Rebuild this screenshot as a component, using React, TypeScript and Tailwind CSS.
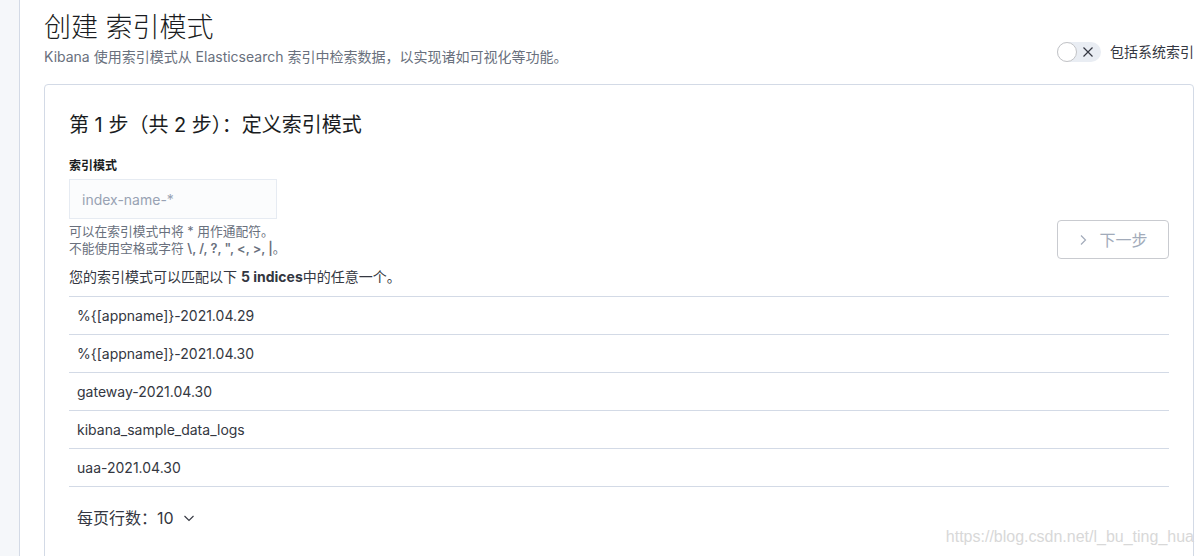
import React from "react";

const rows = [
  "%{[appname]}-2021.04.29",
  "%{[appname]}-2021.04.30",
  "gateway-2021.04.30",
  "kibana_sample_data_logs",
  "uaa-2021.04.30",
];

export default function App() {
  return (
    <div
      className="relative flex h-[556px] w-[1204px] overflow-hidden bg-white text-[#343741]"
      style={{ fontFamily: "Inter, 'Noto Sans CJK SC', sans-serif" }}
    >
      <div className="w-[20px] shrink-0 border-r border-[#d3dae6] bg-[#f5f7fa]" />
      <div className="flex-1 pl-6 pr-[10px] pt-[10px]">
        <div className="flex items-end justify-between">
          <div>
            <h1 className="text-[27px] font-light leading-[36px] text-[#1a1c21]">创建 索引模式</h1>
            <p className="mt-[1px] text-[14px] leading-[20px] text-[#69707d]">
              Kibana 使用索引模式从 Elasticsearch 索引中检索数据，以实现诸如可视化等功能。
            </p>
          </div>
          <div className="mb-[5px] flex items-center gap-[9px]">
            <div className="relative h-[20px] w-[44px] rounded-full bg-[#e9edf3]">
              <div className="absolute left-0 top-0 h-[20px] w-[20px] rounded-full border border-[#c2c3c6] bg-white" />
              <svg className="absolute left-[25px] top-[4px]" width="12" height="12" viewBox="0 0 12 12">
                <path d="M1.5 1.5 L10.5 10.5 M10.5 1.5 L1.5 10.5" stroke="#343741" strokeWidth="1.2" fill="none" />
              </svg>
            </div>
            <span className="text-[14px] leading-[20px] text-[#343741]">包括系统索引</span>
          </div>
        </div>

        <div className="mt-[17px] rounded-[4px] border border-[#d3dae6] px-6 pt-6 pb-10">
          <h2 className="text-[20px] leading-[32px] text-[#1a1c21]">第 1 步（共 2 步）：定义索引模式</h2>
          <div className="mt-4 flex items-end justify-between">
            <div>
              <div className="text-[12px] font-bold leading-[18px] text-[#1a1c21]">索引模式</div>
              <div className="mt-[4px] flex h-[40px] w-[208px] items-center border border-[#e6ebf2] bg-[#fbfcfd] px-3 text-[14px] text-[#98a2b3]">
                index-name-*
              </div>
              <div className="mt-[4px] text-[12.75px] leading-[17px] text-[#69707d]">
                <div>可以在索引模式中将 * 用作通配符。</div>
                <div>
                  不能使用空格或字符 <span className="font-semibold">\, /, ?, ", &lt;, &gt;, |</span>。
                </div>
              </div>
            </div>
            <button className="mb-[-2px] flex h-[39px] w-[112px] items-center justify-center gap-[11px] rounded-[4px] border border-[#c9cbd0] text-[16px] text-[#a2abba]">
              <svg width="10" height="12" viewBox="0 0 10 12">
                <path d="M3 1.5 L7.5 6 L3 10.5" stroke="#a2abba" strokeWidth="1.2" fill="none" />
              </svg>
              下一步
            </button>
          </div>
          <p className="mt-[10px] text-[14px] leading-[20px] text-[#343741]">
            您的索引模式可以匹配以下 <span className="font-bold">5 indices</span>中的任意一个。
          </p>
          <div className="mt-[9px] border-t border-[#d3dae6]">
            {rows.map((r) => (
              <div key={r} className="flex h-[38px] items-center border-b border-[#d3dae6] px-2 text-[14px] text-[#343741]">
                {r}
              </div>
            ))}
          </div>
          <div className="mt-[21px] flex items-center gap-[9px] px-2 text-[16px] leading-[20px] text-[#343741]">
            <span>每页行数：10</span>
            <svg width="12" height="12" viewBox="0 0 12 12">
              <path d="M1.5 4 L6 8.5 L10.5 4" stroke="#343741" strokeWidth="1.1" fill="none" />
            </svg>
          </div>
        </div>
      </div>
      <div
        className="absolute bottom-[7px] right-[10px] text-[16px] text-[#d8d8d8]"
        style={{ fontFamily: "'Liberation Sans', Arial, sans-serif" }}
      >
        https://blog.csdn.net/l_bu_ting_hua
      </div>
    </div>
  );
}
